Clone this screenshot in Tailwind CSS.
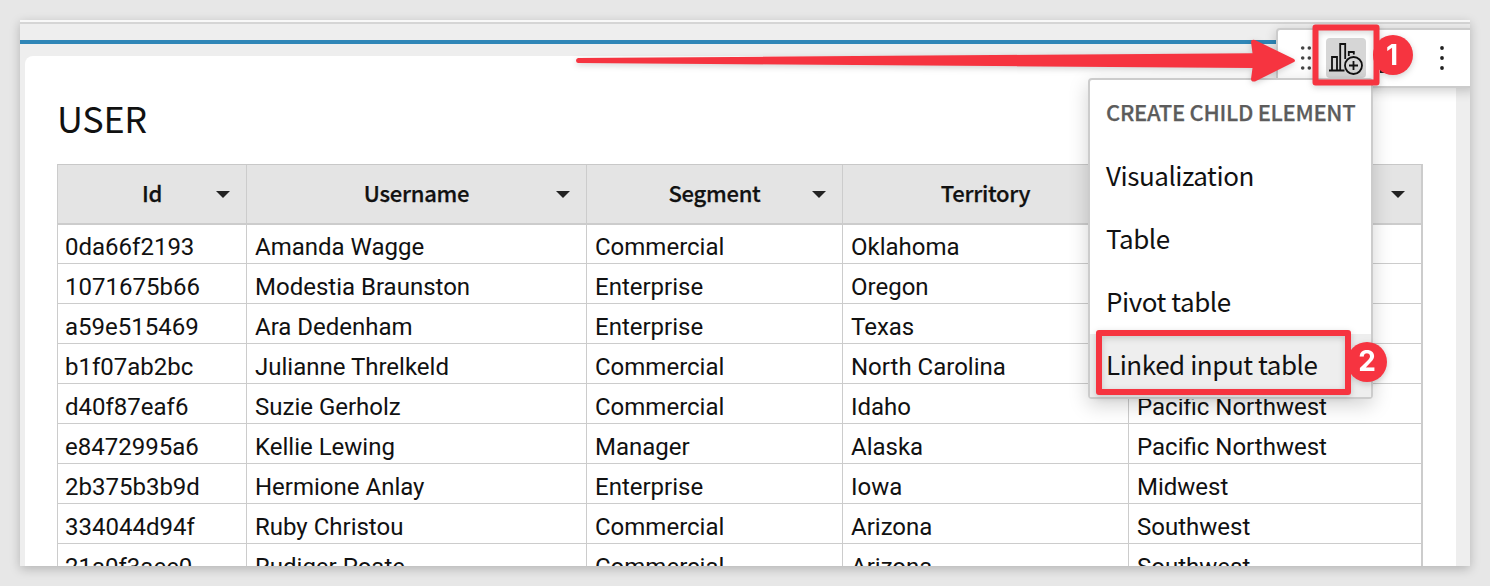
<!DOCTYPE html>
<html lang="en">
<head>
<meta charset="utf-8">
<title>User table</title>
<script src="https://cdn.jsdelivr.net/npm/@tailwindcss/browser@4"></script>
</head>
<body class="w-[1490px] h-[586px] overflow-hidden bg-[#e7e7e7] p-5 text-[#111] relative font-['Noto_Sans_CJK_SC',sans-serif]">
<main class="w-[1450px] h-[546px] shadow-[0_3px_10px_rgba(0,0,0,0.22)]">
<div class="relative w-full h-full overflow-hidden bg-[#eee] flex flex-col">
  <div class="h-0.5 shrink-0 bg-[#f8f8f8]"></div>
  <div class="h-0.5 shrink-0 bg-[#d5d5d5]"></div>
  <div class="h-4 shrink-0"></div>
  <div class="h-1 shrink-0 bg-[#2f86b7]"></div>
  <section class="mt-3 ml-[5px] w-[1431px] h-[510px] shrink-0 rounded-t-lg bg-white pl-8">
    <h1 class="h-[108px] pt-[37px] text-[36px] leading-[48px] tracking-[-0.3px]">USER</h1>
    <div class="w-[1366px] border-t border-l border-r-2 border-t-[#c8c8c8] border-[#ccc]">
      <div class="grid grid-cols-[189px_340px_256px_286px_292px] h-[60px] bg-[#e4e4e4] border-b-2 border-[#ccc] font-medium text-[22px] tracking-[-0.25px] [-webkit-text-stroke:0.25px_#111]" id="head"></div>
      <div id="rows" class="-mt-px font-[Roboto,sans-serif] text-[24px]"></div>
    </div>
  </section>

  <div class="absolute left-[1256px] top-2 w-[200px] h-[60px] rounded-sm border-2 border-[#ccc] bg-white shadow-[0_3px_12px_rgba(0,0,0,0.2)]">
    <svg class="w-full h-full" viewBox="1278 30 196 56">
      <g fill="#444"><circle cx="1302.700" cy="48" r="1.800"/><circle cx="1309.300" cy="48" r="1.800"/><circle cx="1302.700" cy="58" r="1.800"/><circle cx="1309.300" cy="58" r="1.800"/><circle cx="1302.700" cy="68" r="1.800"/><circle cx="1309.300" cy="68" r="1.800"/></g>
      <rect x="1326" y="38" width="40" height="40" rx="4" fill="#d6d6d6"/>
      <g fill="none" stroke="#111" stroke-width="1.800">
        <path d="M1329 70.500H1344.500M1332 70V57H1337V70M1340.200 70V44H1345.200V59M1348.800 56V52H1353.800V54.500"/>
        <circle cx="1353.500" cy="65.500" r="8.500"/>
        <path d="M1353.500 61V70M1349 65.500H1358"/>
      </g>
      <rect x="1380" y="70" width="5" height="3" fill="#222"/>
      <g fill="#222"><circle cx="1442" cy="48" r="1.900"/><circle cx="1442" cy="58" r="1.900"/><circle cx="1442" cy="68" r="1.900"/></g>
    </svg>
  </div>
</div>
</main>

<div class="absolute left-[1088px] top-[78px] w-[285px] h-[321px] rounded-sm border-2 border-[#ccc] bg-white shadow-[0_6px_20px_rgba(0,0,0,0.18)] flex flex-col text-[26px] tracking-[-0.45px] whitespace-nowrap">
  <div class="h-[65px] pl-4 leading-[62px] text-[22px] tracking-[-0.3px] font-medium text-[#5c5c5c] [-webkit-text-stroke:0.25px_#5c5c5c]">CREATE CHILD ELEMENT</div>
  <div class="h-[63px] pl-4 leading-[60px]">Visualization</div>
  <div class="h-[63px] pl-4 leading-[60px]">Table</div>
  <div class="h-[63px] pl-4 leading-[60px]">Pivot table</div>
  <div class="h-[63px] pl-4 leading-[60px] bg-[#eee]">Linked input table</div>
</div>

<svg class="absolute inset-0 drop-shadow-[0_2px_3px_rgba(0,0,0,0.18)]" width="1490" height="586" viewBox="0 0 1490 586">
  <path fill="#f63440" d="M578 58L1252.500 53.300L1251 42Q1251 39 1255 40L1294 59Q1296 61 1294 62L1255 81.500Q1251 82 1251 79L1252.500 68L578 63Q576 62.500 576 60.500T578 58Z"/>
  <g fill="none" stroke="#f63440" stroke-width="6" stroke-linejoin="round"><rect x="1315.500" y="27.500" width="61" height="55"/><rect x="1099" y="333" width="249" height="59"/></g>
  <g fill="#f63440"><circle cx="1393" cy="55" r="20"/><circle cx="1367" cy="362" r="20"/></g>
  <g fill="#fff" font-family="Inter,sans-serif" font-weight="700" font-size="28" text-anchor="middle"><text x="1392" y="65">1</text><text x="1367" y="371">2</text></g>
</svg>
<script>
const heads=['Id','Username','Segment','Territory',''];
document.getElementById('head').innerHTML=heads.map((h,i)=>`<div class="relative flex items-center justify-center pb-1 ${i<4?'border-r border-[#ccc]':''}"><span>${h}</span><svg class="absolute right-4 top-[25.5px] w-[14px] h-[7px]" viewBox="0 0 14 7"><path fill="#222" d="M0 0H14L7 7Z"/></svg></div>`).join('');
const rows=[['0da66f2193','Amanda Wagge','Commercial','Oklahoma',''],['1071675b66','Modestia Braunston','Enterprise','Oregon',''],['a59e515469','Ara Dedenham','Enterprise','Texas',''],['b1f07ab2bc','Julianne Threlkeld','Commercial','North Carolina',''],['d40f87eaf6','Suzie Gerholz','Commercial','Idaho','Pacific Northwest'],['e8472995a6','Kellie Lewing','Manager','Alaska','Pacific Northwest'],['2b375b3b9d','Hermione Anlay','Enterprise','Iowa','Midwest'],['334044d94f','Ruby Christou','Commercial','Arizona','Southwest'],['21a0f3aee0','Rudiger Poate','Commercial','Arizona','Southwest']];
document.getElementById('rows').innerHTML=rows.map(r=>`<div class="grid grid-cols-[189px_340px_256px_286px_292px] h-10 border-b border-[#ccc]">${r.map((c,i)=>`<div class="${i?'pl-2':'pl-[7px]'} pt-[3px] leading-[40px] whitespace-nowrap ${i<4?'border-r border-[#ccc]':''}"><span>${c}</span></div>`).join('')}</div>`).join('');
</script>
</body>
</html>
